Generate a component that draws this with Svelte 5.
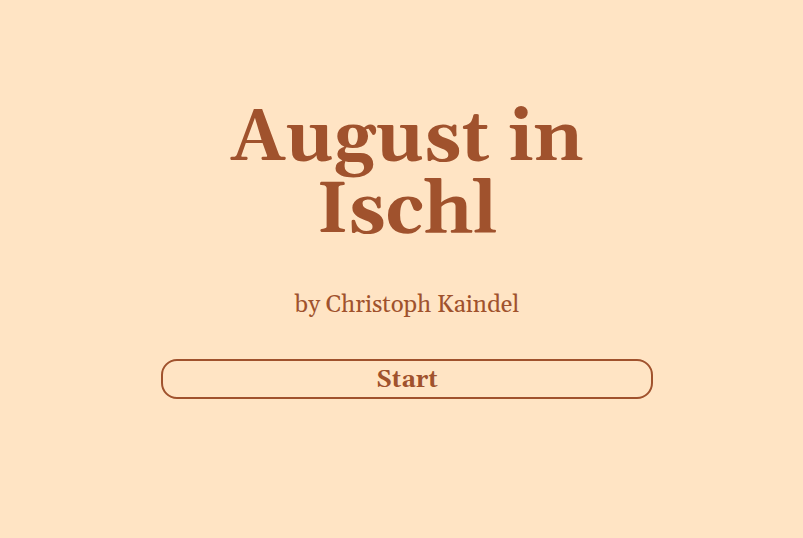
<script lang="ts">
	let started = $state(false);

	const title = 'August in Ischl';
	const author = 'Christoph Kaindel';
</script>

<main>
	<div class="passage">
		<h1>{title}</h1>
		<p>by {author}</p>
		<button type="button" aria-pressed={started} onclick={() => (started = true)}>Start</button>
	</div>
</main>

<style>
	:global(body) {
		background: #ffe4c4;
	}

	main {
		display: flex;
		justify-content: center;
		padding: 103px 29px 40px 40px;
		color: #a0522d;
		font-family: Georgia, Gelasio, 'DejaVu Serif', 'Liberation Serif', serif;
		font-size: 24px;
	}

	.passage {
		display: flex;
		flex-direction: column;
		width: 67%;
		text-align: center;
	}

	h1 {
		margin: 0;
		font-size: 72px;
		line-height: 72px;
	}

	p {
		margin: 42px 0 38px;
		line-height: 32px;
	}

	button {
		padding: 3px 8px 1px;
		border: 2px solid #a0522d;
		border-radius: 16px;
		background: transparent;
		color: inherit;
		font: inherit;
		font-weight: bold;
		line-height: 32px;
		cursor: pointer;
	}

	button:hover {
		background: #ffdab0;
	}
</style>
